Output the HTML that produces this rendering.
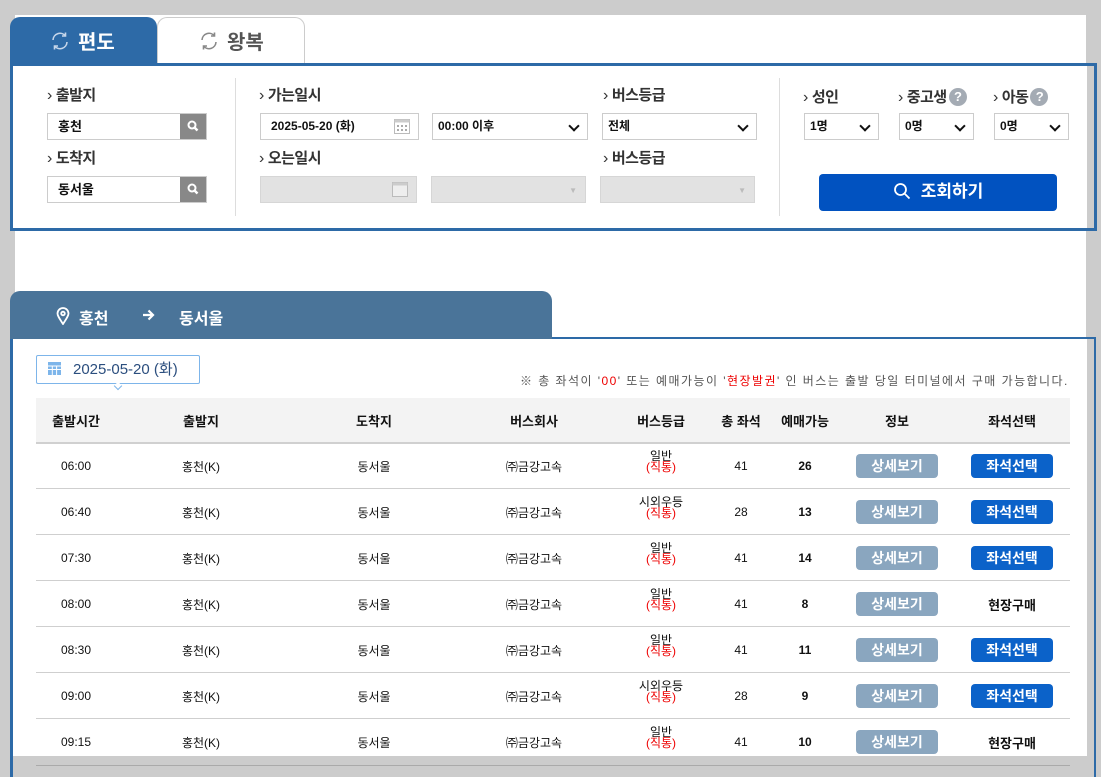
<!DOCTYPE html>
<html><head><meta charset="utf-8"><style>
*{margin:0;padding:0;box-sizing:border-box}
body{width:1101px;height:771px;background:#cccccc;position:relative;overflow:hidden;font-family:"Liberation Sans","Noto Sans CJK KR",sans-serif;color:#222}
.a{position:absolute}
.lbl{position:absolute;font-size:15px;font-weight:bold;color:#333;letter-spacing:-0.5px}
.lbl:before{content:"›";font-weight:normal;margin-right:4px;font-size:16px}
.inp{position:absolute;border:1px solid #ccc;background:#fff;font-size:13px;font-weight:bold;color:#111;padding-left:10px;line-height:25px;height:27px}
.dis{background:#e2e2e2;border-color:#d6d6d6}
.srch{position:absolute;right:0;top:0;width:26px;height:25px;background:#888}
.sel{position:absolute;border:1px solid #ccc;background:#fff;font-size:12px;font-weight:bold;color:#111;padding-left:5px;line-height:25px;height:27px}
.sel:after{content:"";position:absolute;right:9px;top:8px;width:6px;height:6px;border-right:2px solid #111;border-bottom:2px solid #111;transform:rotate(45deg)}
.q{display:inline-block;width:18px;height:18px;border-radius:50%;background:#a4abb4;color:#fff;font-size:13px;text-align:center;line-height:18px;vertical-align:1px;margin-left:2px}
.row{position:absolute;left:36px;width:1034px;height:46px;border-bottom:1px solid #cfcfcf;font-size:12px;color:#111}
.row span,.hd span{position:absolute;transform:translateX(-50%);white-space:nowrap}
.row span{top:15px}
.row span.t{top:16px}
.g{top:8px!important;text-align:center;line-height:11px}
.g i{font-style:normal;color:#e00;display:block}
.b1{width:82px;height:24px;border-radius:4px;background:#8aa6bf;color:#fff;font-weight:bold;font-size:14px;text-align:center;line-height:24px;top:11px!important}
.b2{width:82px;height:24px;border-radius:4px;background:#0b62c9;color:#fff;font-weight:bold;font-size:14px;text-align:center;line-height:24px;top:11px!important}
.hd{position:absolute;left:36px;top:398px;width:1034px;height:46px;background:#f3f3f3;border-bottom:2px solid #d0d0d0;font-size:13px;font-weight:bold;color:#111}
.hd span{top:13px}
</style></head><body>
<div class="a" style="left:15px;top:15px;width:1071px;height:741px;background:#fff"></div>
<!-- tabs -->
<div class="a" style="left:10px;top:17px;width:147px;height:47px;background:#2d6aa7;border-radius:10px 10px 0 0"></div>
<div class="a" style="left:157px;top:17px;width:148px;height:47px;background:#fff;border:1px solid #ccc;border-bottom:none;border-radius:10px 10px 0 0"></div>
<svg class="a" style="left:50px;top:31px" width="20" height="20" viewBox="0 0 20 20" fill="none" stroke="#c6d6ea" stroke-width="1.6"><path d="M3 9a7 7 0 0 1 12.5-4M17 11a7 7 0 0 1-12.5 4"/><path d="M15.5 1.5v3.5H12M4.5 18.5V15H8"/></svg>
<div class="a" style="left:78px;top:26px;color:#fff;font-size:20px;font-weight:bold">편도</div>
<svg class="a" style="left:199px;top:31px" width="20" height="20" viewBox="0 0 20 20" fill="none" stroke="#888" stroke-width="1.6"><path d="M3 9a7 7 0 0 1 12.5-4M17 11a7 7 0 0 1-12.5 4"/><path d="M15.5 1.5v3.5H12M4.5 18.5V15H8"/></svg>
<div class="a" style="left:227px;top:26px;color:#555;font-size:20px;font-weight:bold">왕복</div>
<!-- right grey strip -->
<div class="a" style="left:1087px;top:0;width:14px;height:771px;background:#cccccc"></div>
<!-- search box -->
<div class="a" style="left:10px;top:63px;width:1087px;height:168px;border:3px solid #2d6aa7"></div>
<div class="a" style="left:13px;top:66px;width:1074px;height:162px;background:#fff"></div>
<div class="a" style="left:235px;top:78px;width:1px;height:138px;background:#ddd"></div>
<div class="a" style="left:779px;top:78px;width:1px;height:138px;background:#ddd"></div>
<div class="lbl" style="left:47px;top:84px">출발지</div>
<div class="inp" style="left:47px;top:113px;width:160px">홍천<div class="srch"><svg width="26" height="25"><circle cx="12" cy="11" r="3.5" fill="none" stroke="#fff" stroke-width="2"/><path d="M14.5 13.5l3 3" stroke="#fff" stroke-width="2.5"/></svg></div></div>
<div class="lbl" style="left:47px;top:147px">도착지</div>
<div class="inp" style="left:47px;top:176px;width:160px">동서울<div class="srch"><svg width="26" height="25"><circle cx="12" cy="11" r="3.5" fill="none" stroke="#fff" stroke-width="2"/><path d="M14.5 13.5l3 3" stroke="#fff" stroke-width="2.5"/></svg></div></div>
<div class="lbl" style="left:259px;top:84px">가는일시</div>
<div class="inp" style="left:260px;top:113px;width:159px;font-size:12px">2025-05-20 (화)<svg class="a" style="right:8px;top:5px" width="16" height="15"><rect x="0.5" y="0.5" width="15" height="14" fill="#fff" stroke="#bbb"/><rect x="0.5" y="0.5" width="15" height="3" fill="#ccc"/><g fill="#aaa"><rect x="3" y="6" width="2" height="2"/><rect x="7" y="6" width="2" height="2"/><rect x="11" y="6" width="2" height="2"/><rect x="3" y="10" width="2" height="2"/><rect x="7" y="10" width="2" height="2"/><rect x="11" y="10" width="2" height="2"/></g></svg></div>
<div class="sel" style="left:432px;top:113px;width:156px">00:00 이후</div>
<div class="lbl" style="left:259px;top:147px">오는일시</div>
<div class="inp dis" style="left:260px;top:176px;width:157px"><svg class="a" style="right:8px;top:5px" width="16" height="15"><rect x="0.5" y="0.5" width="15" height="14" fill="#eee" stroke="#bbb"/><rect x="0.5" y="0.5" width="15" height="3" fill="#ccc"/></svg></div>
<div class="inp dis" style="left:431px;top:176px;width:155px"><span class="a" style="right:8px;top:1px;color:#bbb;font-size:8px">▼</span></div>
<div class="lbl" style="left:603px;top:84px">버스등급</div>
<div class="sel" style="left:602px;top:113px;width:155px">전체</div>
<div class="lbl" style="left:603px;top:147px">버스등급</div>
<div class="inp dis" style="left:600px;top:176px;width:155px"><span class="a" style="right:8px;top:1px;color:#bbb;font-size:8px">▼</span></div>
<div class="lbl" style="left:803px;top:86px">성인</div>
<div class="lbl" style="left:898px;top:86px">중고생<span class="q">?</span></div>
<div class="lbl" style="left:993px;top:86px">아동<span class="q">?</span></div>
<div class="sel" style="left:804px;top:113px;width:75px">1명</div>
<div class="sel" style="left:899px;top:113px;width:75px">0명</div>
<div class="sel" style="left:994px;top:113px;width:75px">0명</div>
<div class="a" style="left:819px;top:174px;width:238px;height:37px;background:#0152c0;border-radius:4px;color:#fff;font-size:17px;font-weight:bold;text-align:center;line-height:36px"><svg style="vertical-align:-3px;margin-right:10px" width="18" height="18" fill="none" stroke="#fff" stroke-width="1.8"><circle cx="7.5" cy="7.5" r="5.5"/><path d="M11.5 11.5l5 5"/></svg>조회하기</div>
<!-- result -->
<div class="a" style="left:10px;top:291px;width:542px;height:48px;background:#4a7499;border-radius:10px 10px 0 0"></div>
<div class="a" style="left:10px;top:337px;width:1086px;height:440px;border:2px solid #2d6aa7;border-bottom:none;border-left-width:3px"></div>
<div class="a" style="left:13px;top:339px;width:1074px;height:417px;background:#fff"></div>
<div class="a" style="left:10px;top:337px;width:542px;height:2px;background:#4a7499"></div>
<svg class="a" style="left:56px;top:307px" width="14" height="18" viewBox="0 0 14 18" fill="none" stroke="#fff" stroke-width="1.8"><path d="M7 17C3 11 1.5 8.5 1.5 6.5a5.5 5.5 0 0 1 11 0c0 2-1.5 4.5-5.5 10.5z"/><circle cx="7" cy="6.5" r="1.8"/></svg>
<div class="a" style="left:79px;top:305px;color:#fff;font-size:16px;font-weight:bold">홍천</div>
<svg class="a" style="left:142px;top:309px" width="13" height="12" fill="none" stroke="#fff" stroke-width="2.2"><path d="M1 6h10M6.5 1.5L11 6l-4.5 4.5"/></svg>
<div class="a" style="left:179px;top:305px;color:#fff;font-size:16px;font-weight:bold">동서울</div>
<div class="a" style="left:36px;top:355px;width:164px;height:29px;border:1px solid #7db5ea;border-radius:2px;background:#fff;color:#2b4e7e;font-size:15px;line-height:27px;padding-left:36px">2025-05-20 (화)</div>
<svg class="a" style="left:48px;top:362px" width="13" height="13"><rect width="13" height="13" fill="#7db5ea"/><path d="M0 4h13M0 7.5h13M4.3 4v9M8.6 4v9" stroke="#fff"/></svg>
<div class="a" style="left:115px;top:383px;width:6px;height:6px;background:#fff;border-right:1px solid #7db5ea;border-bottom:1px solid #7db5ea;transform:rotate(45deg)"></div>
<div class="a" style="left:520px;top:372px;font-size:12px;color:#555;letter-spacing:1.45px;white-space:nowrap">※ 총 좌석이 '<span style="color:#e00">00</span>' 또는 예매가능이 '<span style="color:#e00">현장발권</span>' 인 버스는 출발 당일 터미널에서 구매 가능합니다.</div>
<div class="hd"><span style="left:40px">출발시간</span><span style="left:165px">출발지</span><span style="left:338px">도착지</span><span style="left:498px">버스회사</span><span style="left:625px">버스등급</span><span style="left:705px">총 좌석</span><span style="left:769px">예매가능</span><span style="left:861px">정보</span><span style="left:976px">좌석선택</span></div>

<div class="row" style="top:443px"><span class="t" style="left:40px">06:00</span><span style="left:165px">홍천(K)</span><span style="left:338px">동서울</span><span style="left:498px">㈜금강고속</span><span class="g" style="left:625px">일반<i>(직통)</i></span><span class="t" style="left:705px">41</span><span class="t" style="left:769px;font-weight:bold">26</span><span class="b1" style="left:861px">상세보기</span><span class="b2" style="left:976px">좌석선택</span></div>
<div class="row" style="top:489px"><span class="t" style="left:40px">06:40</span><span style="left:165px">홍천(K)</span><span style="left:338px">동서울</span><span style="left:498px">㈜금강고속</span><span class="g" style="left:625px">시외우등<i>(직통)</i></span><span class="t" style="left:705px">28</span><span class="t" style="left:769px;font-weight:bold">13</span><span class="b1" style="left:861px">상세보기</span><span class="b2" style="left:976px">좌석선택</span></div>
<div class="row" style="top:535px"><span class="t" style="left:40px">07:30</span><span style="left:165px">홍천(K)</span><span style="left:338px">동서울</span><span style="left:498px">㈜금강고속</span><span class="g" style="left:625px">일반<i>(직통)</i></span><span class="t" style="left:705px">41</span><span class="t" style="left:769px;font-weight:bold">14</span><span class="b1" style="left:861px">상세보기</span><span class="b2" style="left:976px">좌석선택</span></div>
<div class="row" style="top:581px"><span class="t" style="left:40px">08:00</span><span style="left:165px">홍천(K)</span><span style="left:338px">동서울</span><span style="left:498px">㈜금강고속</span><span class="g" style="left:625px">일반<i>(직통)</i></span><span class="t" style="left:705px">41</span><span class="t" style="left:769px;font-weight:bold">8</span><span class="b1" style="left:861px">상세보기</span><span style="left:976px;font-weight:bold;font-size:13px;top:14px">현장구매</span></div>
<div class="row" style="top:627px"><span class="t" style="left:40px">08:30</span><span style="left:165px">홍천(K)</span><span style="left:338px">동서울</span><span style="left:498px">㈜금강고속</span><span class="g" style="left:625px">일반<i>(직통)</i></span><span class="t" style="left:705px">41</span><span class="t" style="left:769px;font-weight:bold">11</span><span class="b1" style="left:861px">상세보기</span><span class="b2" style="left:976px">좌석선택</span></div>
<div class="row" style="top:673px"><span class="t" style="left:40px">09:00</span><span style="left:165px">홍천(K)</span><span style="left:338px">동서울</span><span style="left:498px">㈜금강고속</span><span class="g" style="left:625px">시외우등<i>(직통)</i></span><span class="t" style="left:705px">28</span><span class="t" style="left:769px;font-weight:bold">9</span><span class="b1" style="left:861px">상세보기</span><span class="b2" style="left:976px">좌석선택</span></div>
<div class="row" style="top:719px;border:none"><span class="t" style="left:40px">09:15</span><span style="left:165px">홍천(K)</span><span style="left:338px">동서울</span><span style="left:498px">㈜금강고속</span><span class="g" style="left:625px">일반<i>(직통)</i></span><span class="t" style="left:705px">41</span><span class="t" style="left:769px;font-weight:bold">10</span><span class="b1" style="left:861px">상세보기</span><span style="left:976px;font-weight:bold;font-size:13px;top:14px">현장구매</span></div>
<!-- bottom overlay -->
<div class="a" style="left:13px;top:756px;width:1080px;height:15px;background:#cccccc"></div>
<div class="a" style="left:36px;top:765px;width:1034px;height:1px;background:#aaa"></div>
</body></html>
